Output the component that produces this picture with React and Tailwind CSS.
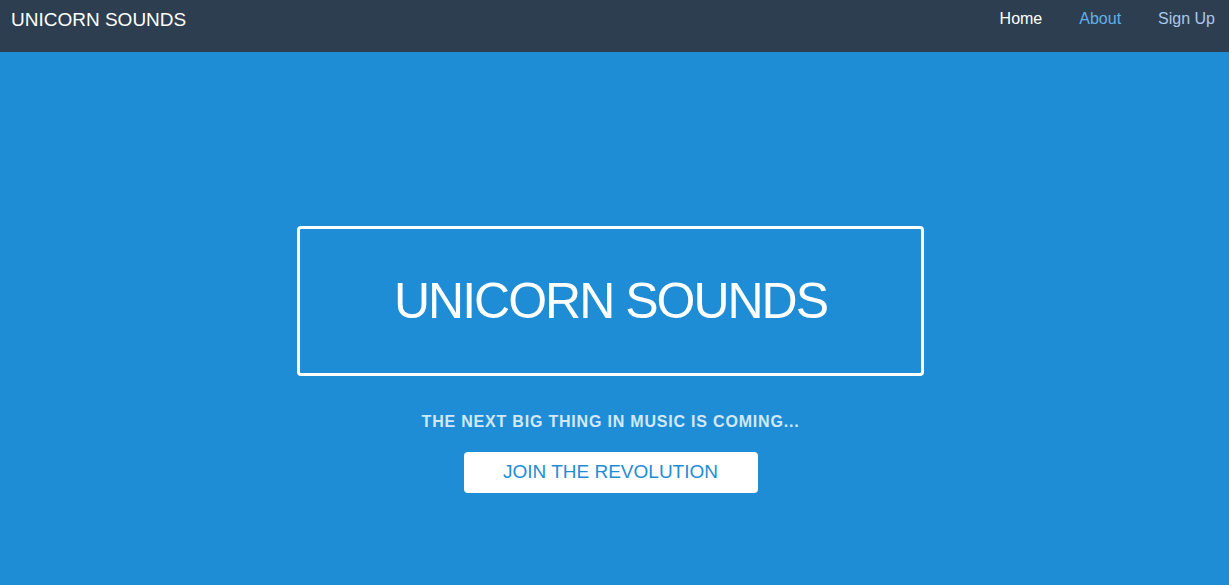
export default function App() {
  const font = { fontFamily: '"Liberation Sans", Arial, sans-serif' };
  return (
    <div className="min-h-[585px] w-full" style={font}>
      <header className="flex h-[52px] items-start justify-between bg-[#2d3e50] pl-[11px] pr-[14px] pt-[10px]">
        <a href="#" className="text-[19px] leading-none text-white">UNICORN SOUNDS</a>
        <nav className="flex items-center gap-[37px] pt-[1px] text-[16px] leading-none">
          <a href="#" className="text-white">Home</a>
          <a href="#" className="text-[#5fb0ec]">About</a>
          <a href="#" className="text-[#a9c8e6]">Sign Up</a>
        </nav>
      </header>

      <main className="flex h-[533px] flex-col items-center bg-[#1f8dd6] pr-[8px] pt-[174px]">
        <div className="flex h-[150px] w-[627px] items-center justify-center rounded-[4px] border-[3px] border-white">
          <h1 className="text-[50px] font-light leading-none tracking-[-2px] text-white">UNICORN SOUNDS</h1>
        </div>
        <p className="mt-[37px] text-[16px] font-bold leading-[18px] tracking-[0.05em] text-[#d2e8f7]">
          THE NEXT BIG THING IN MUSIC IS COMING...
        </p>
        <a href="#" className="mt-[21px] flex h-[41px] w-[294px] items-center justify-center rounded-[4px] bg-white text-[19px] text-[#1f8dd6]">
          JOIN THE REVOLUTION
        </a>
      </main>
    </div>
  );
}
